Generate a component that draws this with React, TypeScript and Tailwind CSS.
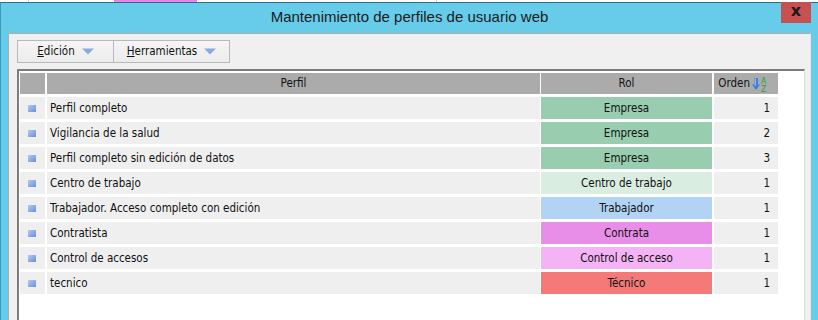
const rows = [
  { perfil: "Perfil completo", rol: "Empresa", color: "bg-[#99cdb0]", orden: 1 },
  { perfil: "Vigilancia de la salud", rol: "Empresa", color: "bg-[#99cdb0]", orden: 2 },
  { perfil: "Perfil completo sin edición de datos", rol: "Empresa", color: "bg-[#99cdb0]", orden: 3 },
  { perfil: "Centro de trabajo", rol: "Centro de trabajo", color: "bg-[#d9ede1]", orden: 1 },
  { perfil: "Trabajador. Acceso completo con edición", rol: "Trabajador", color: "bg-[#b3d3f4]", orden: 1 },
  { perfil: "Contratista", rol: "Contrata", color: "bg-[#e88ee9]", orden: 1 },
  { perfil: "Control de accesos", rol: "Control de acceso", color: "bg-[#f4b3f4]", orden: 1 },
  { perfil: "tecnico", rol: "Técnico", color: "bg-[#f47a7a]", orden: 1 },
];

const narrow =
  "font-['DejaVu_Sans_Condensed','Liberation_Sans',sans-serif] text-[11.5px] text-[#111]";

function DropArrow() {
  return (
    <svg width="12" height="7" viewBox="0 0 12 7">
      <path d="M0 0.5 H12 L6 6.5 Z" fill="#8ea9dc" />
    </svg>
  );
}

function SortIcon() {
  return (
    <svg width="15" height="17" viewBox="0 0 15 17" className="ml-[2px]">
      <path d="M2 2 H6 V8.5 H8 L4 14 L0 8.5 H2 Z" fill="#3d7fdc" />
      <path d="M2.6 2.6 H3.8 V9.5 H2.6 Z" fill="#a9cbf5" />
      <text x="11.5" y="7.5" fontSize="8.5" fill="#2e9e3a" textAnchor="middle" fontFamily="DejaVu Sans Condensed, sans-serif">A</text>
      <text x="11.5" y="16" fontSize="8.5" fill="#2e9e3a" textAnchor="middle" fontFamily="DejaVu Sans Condensed, sans-serif">Z</text>
    </svg>
  );
}

function ToolButton({ label, first, w }: { label: string; first: string; w: string }) {
  return (
    <div
      className={`${w} h-[23px] flex items-center justify-center gap-[7px] bg-gradient-to-b from-[#f5f5f5] to-[#ececec] border border-[#b9b9b9] -ml-px first:ml-0 ${narrow}`}
    >
      <span>
        <span className="underline">{first}</span>
        {label}
      </span>
      <DropArrow />
    </div>
  );
}

export default function App() {
  return (
    <div className="w-[818px] h-[320px] overflow-hidden bg-white flex flex-col">
      {/* desktop strip behind the window */}
      <div className="h-[2px] flex shrink-0">
        <div className="w-[28px] bg-white" />
        <div className="w-px bg-[#d6d6d6]" />
        <div className="w-[85px] bg-white" />
        <div className="w-[83px] bg-[#e884e8]" />
        <div className="w-[239px] bg-white" />
        <div className="w-px bg-[#d6d6d6]" />
        <div className="flex-1 bg-white" />
      </div>

      <div className="flex-1 flex flex-col bg-[#67cbea] border-t border-[#2d6e8c] border-l border-l-[#3f98ba] pl-[7px] pr-[7px]">
        <div className="relative h-[30px] shrink-0 flex items-center justify-center">
          <span className="font-['Liberation_Sans',Arial,sans-serif] text-[15px] text-[#1b1b1b] -mt-[1px]">
            Mantenimiento de perfiles de usuario web
          </span>
          <div className="absolute right-0 top-[-1px] w-[30px] h-[21px] bg-[#c75050] flex items-center justify-center">
            <span className="font-['DejaVu_Sans',sans-serif] font-bold text-[16px] leading-none text-[#1a1a1a] -mt-[3px]">x</span>
          </div>
        </div>

        <div className="flex-1 flex flex-col bg-[#f0f0f0] border-t border-l border-[#adadad] border-r border-r-[#e6e6e6] pl-[8px] pt-[6px]">
          <div className="flex">
            <ToolButton first="E" label="dición" w="w-[97px]" />
            <ToolButton first="H" label="erramientas" w="w-[117px]" />
          </div>

          <div className="mt-[6px] w-[788px] flex-1 bg-white border-t-2 border-l-2 border-[#7c7c7c] border-r border-r-[#dcdcdc] pl-[1px] pt-[2px] flex flex-col gap-[3px]">
            <div className={`flex h-[21px] ${narrow}`}>
              <div className="w-[25px] bg-[#ababab]" />
              <div className="ml-[2px] w-[493px] bg-[#ababab] flex items-center justify-center pt-[1px]">Perfil</div>
              <div className="ml-px w-[171px] bg-[#ababab] flex items-center justify-center pt-[1px]">Rol</div>
              <div className="ml-[2px] w-[64px] bg-[#ababab] flex items-center justify-end pr-[11px] pt-[1px]">
                Orden
                <SortIcon />
              </div>
            </div>
            {rows.map((r) => (
              <div key={r.perfil} className={`flex h-[22px] ${narrow}`}>
                <div className="w-[25px] bg-[#efefef] flex items-center pl-[8px]">
                  <div className="w-[8px] h-[7px] bg-gradient-to-br from-[#b4caf2] to-[#6a8edb]" />
                </div>
                <div className="ml-[2px] w-[493px] bg-[#efefef] flex items-center pl-[3px] pt-[1px]">{r.perfil}</div>
                <div className={`ml-px w-[171px] ${r.color} flex items-center justify-center pt-[1px]`}>{r.rol}</div>
                <div className="ml-[2px] w-[64px] bg-[#efefef] flex items-center justify-end pr-[8px] pt-[1px]">{r.orden}</div>
              </div>
            ))}
          </div>
        </div>
      </div>
    </div>
  );
}
